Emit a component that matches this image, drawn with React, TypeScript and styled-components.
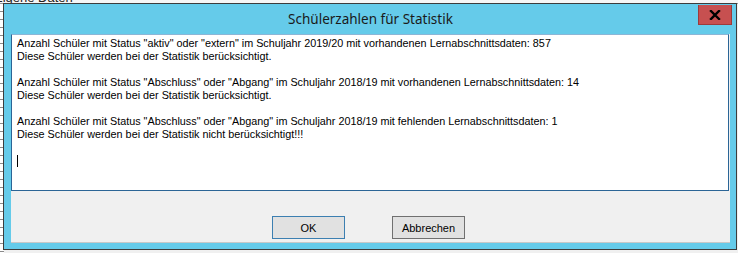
import React from "react";
import styled, { createGlobalStyle } from "styled-components";

const Global = createGlobalStyle`
  html, body { margin: 0; padding: 0; }
  body { width: 738px; height: 253px; overflow: hidden; background: #f0f0f0; }
  #root { width: 738px; height: 253px; }
`;

const Screen = styled.div`
  position: relative;
  width: 738px;
  height: 253px;
  overflow: hidden;
  background: #f0f0f0;
`;

const BackApp = styled.div`
  display: grid;
  grid-template-columns: 4px 1fr;
  grid-template-rows: 4px 1fr;
  width: 100%;
  height: 100%;
`;

const BackHeader = styled.div`
  grid-column: 1 / 3;
  background: #f6f6f6;
  border-bottom: 1px solid #9a9a9a;
  overflow: hidden;
  font: 13px "Liberation Sans", Arial, sans-serif;
  color: #222;
  line-height: 13px;
`;

const BackHeaderText = styled.div`
  margin-top: -9px;
  margin-left: -6px;
`;

const BackList = styled.div`
  background: repeating-linear-gradient(
    to bottom,
    #ffffff 0px,
    #ffffff 7px,
    #8a8a8a 7px,
    #8a8a8a 8px
  );
`;

const Dialog = styled.div`
  position: absolute;
  left: 3px;
  top: 3px;
  width: 734px;
  height: 247px;
  box-sizing: border-box;
  border: 1px solid #3c3c3c;
  background: #65cbea;
  display: flex;
  flex-direction: column;
  padding: 0 6px 6px 7px;
`;

const TitleBar = styled.div`
  height: 30px;
  display: grid;
  grid-template-columns: 1fr auto 1fr;
  align-items: start;
`;

const Title = styled.div`
  grid-column: 2;
  font: 13.5px "Noto Sans", "Open Sans", sans-serif;
  color: #1a1a1a;
  line-height: 20px;
  padding-top: 5px;
  white-space: nowrap;
`;

const CloseButton = styled.div`
  grid-column: 3;
  justify-self: end;
  width: 34px;
  height: 20px;
  margin-top: 1px;
  margin-right: -2px;
  box-sizing: border-box;
  background: #c75050;
  border: 1px solid #9e3a3a;
  border-top: none;
  display: flex;
  align-items: center;
  justify-content: center;
`;

const Client = styled.div`
  flex: 1;
  background: #f0f0f0;
  display: flex;
  flex-direction: column;
  border-bottom: 1px solid #c8c8c8;
`;

const TextBox = styled.div`
  height: 157px;
  box-sizing: border-box;
  background: #ffffff;
  border: 1px solid #2b6596;
  border-top-color: #8cb6d6;
  margin-right: 1px;
  padding: 2px 5px 0 5px;
  font: 10.8px "Liberation Sans", Arial, sans-serif;
  color: #000;
  line-height: 13px;
`;

const Line = styled.div`
  height: 13px;
  white-space: nowrap;
`;

const Caret = styled.div`
  width: 1px;
  height: 12px;
  margin-top: 1px;
  background: #000;
`;

const ButtonRow = styled.div`
  display: flex;
  justify-content: center;
  gap: 47px;
  padding-top: 25px;
  padding-right: 4px;
`;

const Button = styled.div<{ $default?: boolean }>`
  width: 73px;
  height: 23px;
  box-sizing: border-box;
  background: #e1e1e1;
  border: 1px solid ${(p) => (p.$default ? "#3c7fb1" : "#707070")};
  font: 11px "Liberation Sans", Arial, sans-serif;
  color: #000;
  display: flex;
  align-items: center;
  justify-content: center;
`;

const lines = [
  'Anzahl Schüler mit Status "aktiv" oder "extern" im Schuljahr 2019/20 mit vorhandenen Lernabschnittsdaten: 857',
  "Diese Schüler werden bei der Statistik berücksichtigt.",
  "",
  'Anzahl Schüler mit Status "Abschluss" oder "Abgang" im Schuljahr 2018/19 mit vorhandenen Lernabschnittsdaten: 14',
  "Diese Schüler werden bei der Statistik berücksichtigt.",
  "",
  'Anzahl Schüler mit Status "Abschluss" oder "Abgang" im Schuljahr 2018/19 mit fehlenden Lernabschnittsdaten: 1',
  "Diese Schüler werden bei der Statistik nicht berücksichtigt!!!",
  "",
];

export default function App() {
  return (
    <Screen>
      <Global />
      <BackApp>
        <BackHeader>
          <BackHeaderText>Eigene Daten</BackHeaderText>
        </BackHeader>
        <BackList />
      </BackApp>
      <Dialog>
        <TitleBar>
          <Title>Schülerzahlen für Statistik</Title>
          <CloseButton>
            <svg width="12" height="10" viewBox="0 0 12 10">
              <path d="M2 1 L10 9 M10 1 L2 9" stroke="#000" strokeWidth="2.4" strokeLinecap="square" />
            </svg>
          </CloseButton>
        </TitleBar>
        <Client>
          <TextBox>
            {lines.map((l, i) => (
              <Line key={i}>{l}</Line>
            ))}
            <Caret />
          </TextBox>
          <ButtonRow>
            <Button $default>OK</Button>
            <Button>Abbrechen</Button>
          </ButtonRow>
        </Client>
      </Dialog>
    </Screen>
  );
}
